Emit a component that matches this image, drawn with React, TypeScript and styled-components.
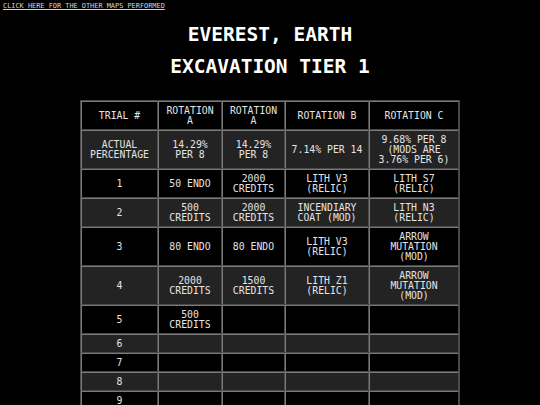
import React from "react";
import styled, { createGlobalStyle } from "styled-components";

const Global = createGlobalStyle`
  html, body { margin: 0; padding: 0; background: #000; }
  body { font-family: "DejaVu Sans Mono", "Liberation Mono", monospace; color: #e6e6e6; }
`;

const Page = styled.div`
  background: #000;
  min-height: 405px;
  padding: 0 0 20px;
`;

const LinkBar = styled.div`
  padding: 2px 0 0 3px;
  font-size: 6.9px;
  line-height: 8px;
  height: 9px;
`;

const TopLink = styled.a`
  color: #d4d4d4;
  text-decoration: underline;
  &:visited { color: #d4d4d4; }
`;

const Titles = styled.div`
  margin-top: 8px;
  text-align: center;
`;

const Title = styled.h1`
  margin: 0;
  font-size: 19.5px;
  line-height: 32px;
  font-weight: bold;
  color: #fff;
`;

const Table = styled.table`
  margin: 17px auto 0;
  width: 378px;
  table-layout: fixed;
  border-collapse: separate;
  border-spacing: 0;
  border: 1px solid #4a4a4a;
`;

const Row = styled.tr<{ $alt: boolean }>`
  background: ${(p) => (p.$alt ? "#232323" : "#000")};
`;

const Cell = styled.td`
  border-top: 1px solid #7a7a7a;
  border-left: 1px solid #7a7a7a;
  border-right: 1px solid #4a4a4a;
  border-bottom: 1px solid #4a4a4a;
  padding: 4px 5px 3px;
  font-size: 9.8px;
  line-height: 10px;
  text-align: center;
  color: #e4e4e4;
  word-wrap: break-word;
`;

const HeadCell = styled(Cell).attrs({ as: "th" })`
  font-weight: normal;
`;

const cols = [77, 64, 63, 84, 90];

const rows: string[][] = [
  ["ACTUAL PERCENTAGE", "14.29% PER 8", "14.29% PER 8", "7.14% PER 14", "9.68% PER 8 (MODS ARE 3.76% PER 6)"],
  ["1", "50 ENDO", "2000 CREDITS", "LITH V3 (RELIC)", "LITH S7 (RELIC)"],
  ["2", "500 CREDITS", "2000 CREDITS", "INCENDIARY COAT (MOD)", "LITH N3 (RELIC)"],
  ["3", "80 ENDO", "80 ENDO", "LITH V3 (RELIC)", "ARROW MUTATION (MOD)"],
  ["4", "2000 CREDITS", "1500 CREDITS", "LITH Z1 (RELIC)", "ARROW MUTATION (MOD)"],
  ["5", "500 CREDITS", "", "", ""],
  ["6", "", "", "", ""],
  ["7", "", "", "", ""],
  ["8", "", "", "", ""],
  ["9", "", "", "", ""],
  ["10", "", "", "", ""],
];

export default function App() {
  return (
    <Page>
      <Global />
      <LinkBar>
        <TopLink href="#">CLICK HERE FOR THE OTHER MAPS PERFORMED</TopLink>
      </LinkBar>
      <Titles>
        <Title>EVEREST, EARTH</Title>
        <Title>EXCAVATION TIER 1</Title>
      </Titles>
      <Table>
        <colgroup>
          {cols.map((w, i) => (
            <col key={i} style={{ width: w }} />
          ))}
        </colgroup>
        <thead>
          <Row $alt={false}>
            <HeadCell>TRIAL #</HeadCell>
            <HeadCell>ROTATION A</HeadCell>
            <HeadCell>ROTATION A</HeadCell>
            <HeadCell>ROTATION B</HeadCell>
            <HeadCell>ROTATION C</HeadCell>
          </Row>
        </thead>
        <tbody>
          {rows.map((r, i) => (
            <Row key={i} $alt={i % 2 === 0}>
              {r.map((c, j) => (
                <Cell key={j}>{c || "\u00a0"}</Cell>
              ))}
            </Row>
          ))}
        </tbody>
      </Table>
    </Page>
  );
}
